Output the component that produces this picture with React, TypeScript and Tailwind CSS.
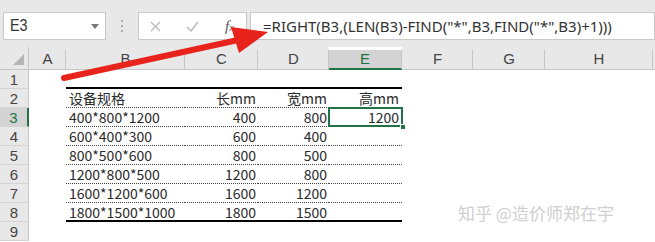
import React from "react";

const cols = ["A", "B", "C", "D", "E", "F", "G", "H"];

type Row = { b?: string; c?: string; d?: string; e?: string };

const rows: Row[] = [
  {},
  { b: "设备规格", c: "长mm", d: "宽mm", e: "高mm" },
  { b: "400*800*1200", c: "400", d: "800", e: "1200" },
  { b: "600*400*300", c: "600", d: "400" },
  { b: "800*500*600", c: "800", d: "500" },
  { b: "1200*800*500", c: "1200", d: "800" },
  { b: "1600*1200*600", c: "1600", d: "1200" },
  { b: "1800*1500*1000", c: "1800", d: "1500" },
  {},
];

const cellFont = { fontFamily: '"Noto Sans CJK SC", "Noto Sans", sans-serif' };

function tableBorder(r: number) {
  if (r === 0) return "border-b-2 border-black";
  if (r >= 1 && r <= 6) return "border-b border-dotted border-[#444]";
  if (r === 7) return "border-b-2 border-black";
  return "";
}

export default function App() {
  return (
    <div className="relative w-[655px] h-[242px] overflow-hidden bg-white">
      {/* Formula bar area */}
      <div className="h-[47px] bg-[#e8e8e8] flex items-start pt-[12px] pl-[3px]">
        <div className="w-[103px] h-[28px] bg-white border border-[#c9c9c9] flex items-center justify-between pl-[6px] pr-[6px]">
          <span className="text-[16px] text-[#333] leading-none" style={{ fontFamily: '"Liberation Sans", sans-serif', transform: "scaleX(0.9)", transformOrigin: "left" }}>E3</span>
          <svg width="8" height="5" viewBox="0 0 8 5"><path d="M0 0 L8 0 L4 5 Z" fill="#777" /></svg>
        </div>
        <div className="w-[32px] h-[28px] flex flex-col items-center justify-center gap-[3px]">
          <span className="w-[2px] h-[2px] bg-[#aaa]" />
          <span className="w-[2px] h-[2px] bg-[#aaa]" />
          <span className="w-[2px] h-[2px] bg-[#aaa]" />
        </div>
        <div className="w-[109px] h-[28px] bg-white border border-[#c9c9c9] flex items-center">
          <svg className="ml-[11px]" width="11" height="11" viewBox="0 0 11 11"><path d="M1 1 L10 10 M10 1 L1 10" stroke="#b9b9b9" strokeWidth="1.3" /></svg>
          <svg className="ml-[25px]" width="13" height="11" viewBox="0 0 13 11"><path d="M1 6 L5 10 L12 1" stroke="#b9b9b9" strokeWidth="1.4" fill="none" /></svg>
          <span className="ml-[26px] text-[15px] italic text-[#555] leading-none" style={{ fontFamily: '"Liberation Serif", serif' }}>f<span className="text-[10px]">x</span></span>
        </div>
        <div className="ml-[3px] flex-1 h-[28px] bg-white border border-[#c9c9c9] flex items-center pl-[12px]">
          <span className="text-[15px] text-[#333] leading-none whitespace-nowrap" style={{ fontFamily: '"Noto Sans", sans-serif' }}>
            =RIGHT(B3,(LEN(B3)-FIND("*",B3,FIND("*",B3)+1)))
          </span>
        </div>
      </div>

      {/* Sheet grid */}
      <div className="grid grid-cols-[29px_37px_119px_73px_71px_73px_71px_72px_108px_1fr] grid-rows-[23px_repeat(9,19px)]">
        {/* header row */}
        <div className="bg-[#e8e8e8] border-b border-r border-[#c6c6c6] flex items-end justify-end pr-[4px] pb-[4px]">
          <svg width="11" height="11" viewBox="0 0 11 11"><path d="M11 0 L11 11 L0 11 Z" fill="#b5b5b5" /></svg>
        </div>
        {cols.map((c) => (
          <div
            key={c}
            className={
              c === "E"
                ? "bg-[#d3d3d3] border-b-2 border-b-[#217346] border-r border-r-[#c6c6c6] mt-[3px] flex items-end justify-center pb-[2px] text-[15px] text-[#217346]"
                : "bg-[#e8e8e8] border-b border-[#c6c6c6] flex items-end justify-center pb-[3px] text-[15px] text-[#444] relative after:content-[''] after:absolute after:right-0 after:top-[3px] after:bottom-0 after:w-px after:bg-[#c6c6c6]"
            }
            style={{ fontFamily: '"Liberation Sans", sans-serif' }}
          >
            <span className="leading-none">{c}</span>
          </div>
        ))}
        <div className="bg-[#e8e8e8] border-b border-[#c6c6c6]" />

        {rows.map((row, r) => {
          const sel = r === 2;
          const tb = tableBorder(r);
          return (
            <React.Fragment key={r}>
              <div
                className={
                  sel
                    ? "bg-[#d3d3d3] border-r-2 border-r-[#217346] border-b border-b-[#d4d4d4] flex items-center justify-center text-[15px] text-[#217346]"
                    : "bg-[#e8e8e8] border-r border-r-[#c6c6c6] border-b border-b-[#d4d4d4] flex items-center justify-center text-[15px] text-[#444]"
                }
                style={{ fontFamily: '"Liberation Sans", sans-serif' }}
              >
                <span className="leading-none">{r + 1}</span>
              </div>
              <div />
              <div className={`${tb} flex items-center pl-[3px] text-[14px] text-[#2a2a2a] whitespace-nowrap`} style={cellFont}>
                <span className="leading-none">{row.b}</span>
              </div>
              <div className={`${tb} flex items-center justify-end pr-[2px] text-[14px] text-[#2a2a2a]`} style={cellFont}>
                <span className="leading-none">{row.c}</span>
              </div>
              <div className={`${tb} flex items-center justify-end pr-[2px] text-[14px] text-[#2a2a2a]`} style={cellFont}>
                <span className="leading-none">{row.d}</span>
              </div>
              <div className={`${tb} relative flex items-center justify-end pr-[3px] text-[14px] text-[#2a2a2a]`} style={cellFont}>
                <span className="leading-none">{row.e}</span>
                {sel && (
                  <>
                    <div className="absolute left-[-1px] top-[-1px] right-[-1px] bottom-[-1px] border-2 border-[#217346]" />
                    <div className="absolute right-[-4px] bottom-[-4px] w-[6px] h-[6px] bg-[#217346] border border-white" />
                  </>
                )}
              </div>
              <div />
              <div />
              <div />
              <div />
            </React.Fragment>
          );
        })}
      </div>

      {/* watermark */}
      <div
        className="absolute left-[458px] top-[204px] text-[17px] text-[#cfcfcf] whitespace-nowrap leading-none"
        style={{ fontFamily: '"Noto Sans CJK SC", sans-serif' }}
      >
        知乎 @造价师郑在宇
      </div>

      {/* red arrow annotation */}
      <svg className="absolute left-0 top-0 pointer-events-none" width="655" height="242" viewBox="0 0 655 242">
        <path d="M64 78 L238 40" stroke="#e8231c" strokeWidth="6" strokeLinecap="round" />
        <path d="M231 27 L268 32 L239 53 Z" fill="#e8231c" />
      </svg>
    </div>
  );
}
